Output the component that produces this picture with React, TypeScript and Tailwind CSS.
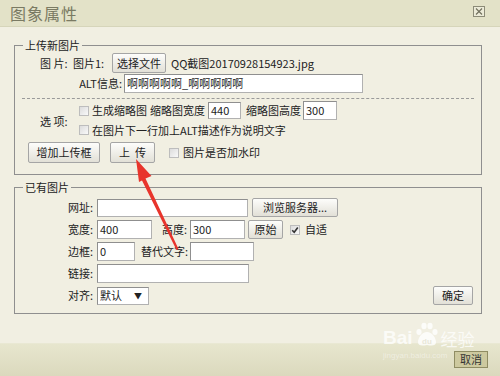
import React from 'react';

const font = "font-['Noto_Sans_CJK_SC','Noto_Sans',sans-serif]";

function Box({ className = '', children }: { className?: string; children?: React.ReactNode }) {
  return (
    <div
      className={`flex shrink-0 items-center bg-white border border-[#b1b1b1] border-t-[#8f8f8f] border-l-[#8f8f8f] px-[2px] text-[11px] leading-none text-[#222] ${className}`}
    >
      {children}
    </div>
  );
}

function Btn({ className = '', children }: { className?: string; children?: React.ReactNode }) {
  return (
    <div
      className={`flex shrink-0 items-center justify-center rounded-[2px] border border-[#a5a5a5] bg-linear-to-b from-[#fdfdfb] to-[#e2e0d7] text-[11px] leading-none text-[#222] ${className}`}
    >
      {children}
    </div>
  );
}

function Check({ checked = false }: { checked?: boolean }) {
  return (
    <div className="relative w-[10px] h-[10px] shrink-0 border border-[#bdbdbd] bg-linear-to-br from-[#dcdcdc] to-[#f9f9f9]">
      {checked && (
        <svg className="absolute left-0 top-0" width="8" height="8" viewBox="0 0 8 8">
          <path d="M1.2 4.2 L3.2 6.2 L6.8 1.4" fill="none" stroke="#333" strokeWidth="1.6" />
        </svg>
      )}
    </div>
  );
}

export default function App() {
  return (
    <div className={`relative w-[500px] h-[376px] overflow-hidden whitespace-nowrap bg-[#f1efe2] flex flex-col text-[#222] ${font}`}>
      {/* title bar */}
      <div className="h-[27px] shrink-0 flex items-center justify-between pl-[10px] pr-[15px] bg-[#e3e2c8] border-b border-[#d6d5ba]">
        <span className="text-[16px] tracking-[1px] leading-none text-[#7a7a63]">图象属性</span>
        <svg width="12" height="11" viewBox="0 0 12 11" className="mb-[3px]">
          <rect x="0.5" y="0.5" width="11" height="10" fill="#ecebd8" stroke="#8c8b78" />
          <path d="M3 2.5 L9 8.5 M9 2.5 L3 8.5" stroke="#6f6e5c" strokeWidth="1.1" />
        </svg>
      </div>

      {/* body */}
      <div className="flex-1 flex flex-col pl-[14px] pt-[11px]">
        <fieldset className="w-[468px] border border-[#8f8f8f] pb-[11px] text-[11px] leading-none">
          <legend className="ml-[8px] px-[2px] text-[11px] leading-[14px]">上传新图片</legend>

          <div className="mt-[1px] h-[20px] flex items-center pl-[25px]">
            <span className="w-[33px] shrink-0">图 片:</span>
            <span className="w-[39px] shrink-0">图片1:</span>
            <Btn className="w-[54px] h-[20px]">选择文件</Btn>
            <span className="ml-[5px]">QQ截图20170928154923.jpg</span>
          </div>

          <div className="mt-[1px] h-[19px] flex items-center">
            <span className="w-[109px] shrink-0 text-right pr-[2px]">ALT信息:</span>
            <Box className="w-[239px] h-[19px]">啊啊啊啊啊_啊啊啊啊啊</Box>
          </div>

          <div className="mt-[5px] ml-[7px] w-[452px] border-t border-dashed border-[#9a9a9a]" />

          <div className="mt-[2px] flex">
            <span className="ml-[25px] w-[39px] shrink-0 self-center mt-[4px]">选 项:</span>
            <div className="flex flex-col">
              <div className="h-[19px] flex items-center">
                <Check />
                <span className="ml-[3px] w-[58px] shrink-0">生成缩略图</span>
                <span className="w-[58px] shrink-0">缩略图宽度</span>
                <Box className="w-[33px] h-[17px]">440</Box>
                <span className="ml-[5px] w-[57px] shrink-0">缩略图高度</span>
                <Box className="w-[34px] h-[19px]">300</Box>
              </div>
              <div className="mt-[2px] h-[16px] flex items-center">
                <Check />
                <span className="ml-[3px]">在图片下一行加上ALT描述作为说明文字</span>
              </div>
            </div>
          </div>

          <div className="mt-[4px] h-[21px] flex items-center pl-[13px]">
            <Btn className="w-[72px] h-[21px]">增加上传框</Btn>
            <Btn className="ml-[10px] w-[45px] h-[21px]">上&nbsp;&nbsp;传</Btn>
            <div className="ml-[14px]">
              <Check />
            </div>
            <span className="ml-[4px]">图片是否加水印</span>
          </div>
        </fieldset>

        <fieldset className="mt-[5px] w-[468px] border border-[#8f8f8f] pb-[8px] text-[11px] leading-none">
          <legend className="ml-[8px] px-[2px] text-[11px] leading-[14px]">已有图片</legend>

          <div className="mt-[4px] flex flex-col gap-[3px]">
            <div className="h-[19px] flex items-center">
              <span className="w-[78px] shrink-0 text-right">网址:</span>
              <Box className="ml-[4px] w-[151px] h-[18px]" />
              <Btn className="ml-[4px] w-[86px] h-[19px]">浏览服务器...</Btn>
            </div>
            <div className="h-[19px] flex items-center">
              <span className="w-[78px] shrink-0 text-right">宽度:</span>
              <Box className="ml-[4px] w-[55px] h-[19px]">400</Box>
              <span className="w-[35px] shrink-0 text-right">高度:</span>
              <Box className="ml-[3px] w-[55px] h-[19px]">300</Box>
              <Btn className="ml-[3px] w-[35px] h-[19px]">原始</Btn>
              <div className="ml-[7px]">
                <Check checked />
              </div>
              <span className="ml-[5px]">自适</span>
            </div>
            <div className="h-[19px] flex items-center">
              <span className="w-[78px] shrink-0 text-right">边框:</span>
              <Box className="ml-[4px] w-[38px] h-[19px]">0</Box>
              <span className="ml-[6px] w-[48px] shrink-0">替代文字:</span>
              <Box className="ml-[1px] w-[64px] h-[19px]" />
            </div>
            <div className="h-[19px] flex items-center">
              <span className="w-[78px] shrink-0 text-right">链接:</span>
              <Box className="ml-[4px] w-[152px] h-[19px]" />
            </div>
            <div className="h-[19px] flex items-center">
              <span className="w-[78px] shrink-0 text-right">对齐:</span>
              <Box className="ml-[4px] w-[52px] h-[18px] justify-between pr-[6px]">
                <span>默认</span>
                <span className="text-[8px]">▼</span>
              </Box>
              <div className="flex-1" />
              <Btn className="mr-[8px] w-[40px] h-[19px]">确定</Btn>
            </div>
          </div>
        </fieldset>
      </div>

      {/* footer */}
      <div className="h-[33px] shrink-0 flex items-center justify-end pr-[12px] pb-[2px] bg-linear-to-b from-[#e7e6ce] to-[#dbd9bd] border-t border-[#e9e8d3]">
        <div className="w-[34px] h-[17px] flex items-center justify-center bg-[#cdc99f] border border-[#8f8c63] text-[11px] leading-none text-[#333]">
          取消
        </div>
      </div>

      {/* baidu watermark */}
      <div className="absolute left-[383px] top-[322px] flex flex-col items-start pointer-events-none">
        <div className="flex items-end">
          <span className="text-[19px] leading-none font-bold text-white/75 font-['Liberation_Sans',sans-serif]">Bai</span>
          <svg width="26" height="25" viewBox="0 0 26 25" className="mx-[1px]">
            <g fill="rgba(255,255,255,0.8)">
              <ellipse cx="5" cy="10" rx="2.6" ry="3" />
              <ellipse cx="10" cy="4" rx="2.6" ry="3.2" />
              <ellipse cx="16" cy="4" rx="2.6" ry="3.2" />
              <ellipse cx="21" cy="10" rx="2.6" ry="3" />
              <path d="M13 10 C8 10 4 16 4 20 C4 24 8 24 13 23 C18 24 22 24 22 20 C22 16 18 10 13 10 Z" />
            </g>
            <text x="13" y="21.5" textAnchor="middle" fontSize="8" fontWeight="bold" fill="#e9e7d8" fontFamily="Liberation Sans, sans-serif">du</text>
          </svg>
          <span className="text-[17px] leading-none text-white/75">经验</span>
        </div>
        <span className="mt-[5px] text-[8px] leading-none text-white/45 font-['Liberation_Sans',sans-serif]">jingyan.baidu.com</span>
      </div>

      {/* red arrow */}
      <svg className="absolute left-0 top-0 pointer-events-none" width="500" height="376" viewBox="0 0 500 376">
        <polygon points="136,159 151.5,176 145.5,178.5 178.5,249 176.5,250 142,180.5 139,182" fill="#e8352c" />
      </svg>
    </div>
  );
}
